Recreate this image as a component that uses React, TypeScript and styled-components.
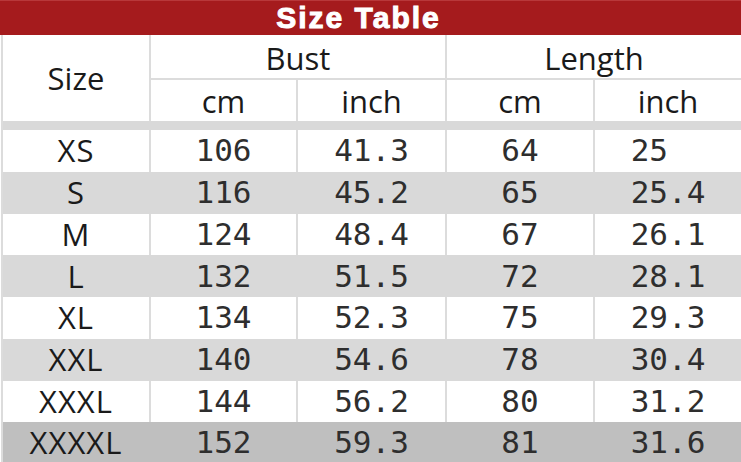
import * as React from 'react';
import styled, { createGlobalStyle } from 'styled-components';

const GlobalStyle = createGlobalStyle`
  html, body {
    margin: 0;
    padding: 0;
    background: #fff;
    overflow: hidden;
  }
`;

const COLUMNS = '146px 145px 147px 146px 1fr';
const LINE = '#dcdcdc';

type Tone = 'white' | 'light' | 'dark';

const toneColor: Record<Tone, string> = {
  white: '#ffffff',
  light: '#d9d9d9',
  dark: '#bfbfbf',
};

const Page = styled.div`
  width: 741px;
  height: 462px;
  overflow: hidden;
  background: #fff;
`;

const TitleBar = styled.div`
  box-sizing: border-box;
  height: 35px;
  background: #a51b1d;
  border-top: 1px solid #b8383a;
  display: flex;
  align-items: center;
  justify-content: center;
  padding-right: 24px;
`;

const Title = styled.h1`
  margin: 0;
  font: bold 30px/1 "Liberation Sans", Arial, sans-serif;
  color: #fff;
  letter-spacing: 2px;
  -webkit-text-stroke: 1px #fff;
`;

const Table = styled.div`
  margin-left: 1px;
  border-left: 2px solid ${LINE};
`;

const Header = styled.div`
  display: grid;
  grid-template-columns: ${COLUMNS};
  grid-template-rows: 43px 41px;
  gap: 2px;
  background: ${LINE};
`;

const HeadCell = styled.div<{ $rows?: number; $cols?: number; $drop?: number }>`
  grid-row: span ${(p) => p.$rows ?? 1};
  grid-column: span ${(p) => p.$cols ?? 1};
  background: #fff;
  display: flex;
  align-items: center;
  justify-content: center;
  padding-top: ${(p) => p.$drop ?? 0}px;
  font: 500 31px/1 "Open Sans", "Liberation Sans", sans-serif;
  color: #1a1a1a;
`;

const Divider = styled.div`
  height: 9px;
  background: #d9d9d9;
`;

const Row = styled.div<{ $tone: Tone }>`
  display: grid;
  grid-template-columns: ${COLUMNS};
  column-gap: 2px;
  height: ${(p) => (p.$tone === 'dark' ? 39.75 : 41.75)}px;
  background: ${(p) => (p.$tone === 'white' ? LINE : toneColor[p.$tone])};
`;

const Cell = styled.div<{ $tone: Tone }>`
  background: ${(p) => toneColor[p.$tone]};
  display: flex;
  align-items: center;
  justify-content: center;
`;

const SizeLabel = styled.span`
  font: 500 31px/1 "Open Sans", "Liberation Sans", sans-serif;
  letter-spacing: 1px;
  color: #1a1a1a;
`;

const Value = styled.span`
  font: 31px/1 "DejaVu Sans Mono", "Liberation Mono", monospace;
  color: #2e2e2e;
  white-space: pre;
`;

const rows: [string, number, string, number, string][] = [
  ['XS', 106, '41.3', 64, '25'],
  ['S', 116, '45.2', 65, '25.4'],
  ['M', 124, '48.4', 67, '26.1'],
  ['L', 132, '51.5', 72, '28.1'],
  ['XL', 134, '52.3', 75, '29.3'],
  ['XXL', 140, '54.6', 78, '30.4'],
  ['XXXL', 144, '56.2', 80, '31.2'],
  ['XXXXL', 152, '59.3', 81, '31.6'],
];

const toneFor = (i: number): Tone => {
  if (i === rows.length - 1) return 'dark';
  return i % 2 === 1 ? 'light' : 'white';
};

export default function App() {
  return (
    <Page>
      <GlobalStyle />
      <TitleBar>
        <Title>Size Table</Title>
      </TitleBar>
      <Table>
        <Header>
          <HeadCell $rows={2}>Size</HeadCell>
          <HeadCell $cols={2} $drop={3}>Bust</HeadCell>
          <HeadCell $cols={2} $drop={3}>Length</HeadCell>
          <HeadCell $drop={2}>cm</HeadCell>
          <HeadCell $drop={2}>inch</HeadCell>
          <HeadCell $drop={2}>cm</HeadCell>
          <HeadCell $drop={2}>inch</HeadCell>
        </Header>
        <Divider />
        {rows.map(([size, bustCm, bustIn, lenCm, lenIn], i) => {
          const tone = toneFor(i);
          return (
            <Row key={size} $tone={tone}>
              <Cell $tone={tone}><SizeLabel>{size}</SizeLabel></Cell>
              <Cell $tone={tone}><Value>{bustCm}</Value></Cell>
              <Cell $tone={tone}><Value>{bustIn.padEnd(4, ' ')}</Value></Cell>
              <Cell $tone={tone}><Value>{lenCm}</Value></Cell>
              <Cell $tone={tone}><Value>{lenIn.padEnd(4, ' ')}</Value></Cell>
            </Row>
          );
        })}
      </Table>
    </Page>
  );
}
